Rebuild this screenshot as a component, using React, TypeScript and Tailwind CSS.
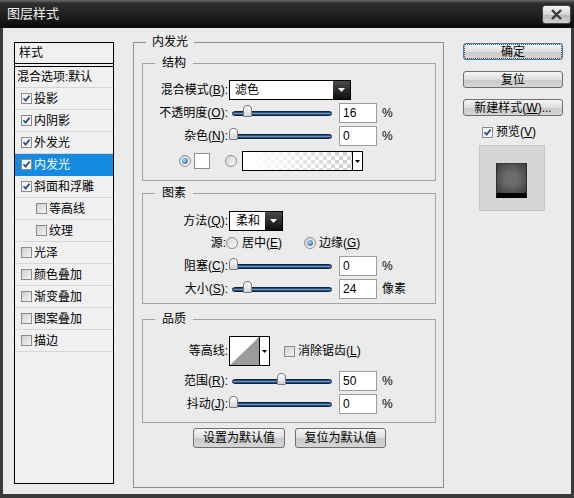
import React from "react";

type Item = { label: string; checked: boolean; indent?: boolean; active?: boolean };

const STYLES: Item[] = [
  { label: "投影", checked: true },
  { label: "内阴影", checked: true },
  { label: "外发光", checked: true },
  { label: "内发光", checked: true, active: true },
  { label: "斜面和浮雕", checked: true },
  { label: "等高线", checked: false, indent: true },
  { label: "纹理", checked: false, indent: true },
  { label: "光泽", checked: false },
  { label: "颜色叠加", checked: false },
  { label: "渐变叠加", checked: false },
  { label: "图案叠加", checked: false },
  { label: "描边", checked: false },
];

function Check({ on }: { on: boolean }) {
  return (
    <span
      className={`flex h-[11px] w-[11px] shrink-0 items-center justify-center border border-[#8a8a8a] ${
        on ? "bg-[#f6f6f6]" : "bg-[linear-gradient(135deg,#cfcfcf,#f5f5f5)]"
      }`}
    >
      {on && (
        <svg width="9" height="9" viewBox="0 0 9 9">
          <path d="M1.5 4.2 L3.6 6.6 L7.6 1.6" fill="none" stroke="#2a4f8f" strokeWidth="1.7" />
        </svg>
      )}
    </span>
  );
}

function Radio({ on }: { on: boolean }) {
  return (
    <span className="flex h-[12px] w-[12px] shrink-0 items-center justify-center rounded-full border border-[#8d8d8d] bg-[linear-gradient(135deg,#d3d3d3,#fbfbfb)]">
      {on && (
        <span className="h-[6px] w-[6px] rounded-full bg-[radial-gradient(circle_at_35%_35%,#a6d6f7,#1b5b98)]" />
      )}
    </span>
  );
}

function Label({ w = "w-[85px]", children }: { w?: string; children: React.ReactNode }) {
  return <span className={`${w} shrink-0 text-right`}>{children}</span>;
}

function Slider({ thumb }: { thumb: string }) {
  return (
    <div className="relative ml-[1px] flex h-[20px] w-[106px] shrink-0 items-center px-[3px]">
      <div className="h-[5px] w-full rounded-full border border-[#0d223d] bg-[linear-gradient(to_bottom,#12304f,#5f93c9_50%,#12304f)]" />
      <div
        className={`absolute top-[2px] h-[12px] w-[9px] rounded-t-[4px] rounded-b-[1px] border border-[#7a7a7a] bg-[linear-gradient(to_bottom,#ffffff,#d4d4d4)] ${thumb}`}
      />
    </div>
  );
}

function Num({ v }: { v: string }) {
  return (
    <div className="ml-[4px] flex h-[20px] w-[38px] shrink-0 items-center border border-[#9c9c9c] bg-white pl-[3px]">
      {v}
    </div>
  );
}

function DropBtn() {
  return (
    <span className="flex h-full w-[17px] items-center justify-center bg-[linear-gradient(to_bottom,#4a4a4a,#0e0e0e)]">
      <svg width="7" height="4" viewBox="0 0 7 4">
        <path d="M0 0 H7 L3.5 4 Z" fill="#ffffff" />
      </svg>
    </span>
  );
}

function SmallArrow() {
  return (
    <span className="flex h-full w-[10px] items-center justify-center border-l border-black bg-white">
      <svg width="5" height="3" viewBox="0 0 5 3">
        <path d="M0 0 H5 L2.5 3 Z" fill="#000000" />
      </svg>
    </span>
  );
}

function Btn({
  children,
  className = "",
  focus = false,
}: {
  children: React.ReactNode;
  className?: string;
  focus?: boolean;
}) {
  return (
    <div
      className={`flex h-[17px] items-center justify-center rounded-[3px] border bg-[linear-gradient(to_bottom,#f6f6f6,#dedede_50%,#c9c9c9_52%,#d6d6d6)] ${
        focus ? "border-[#3b7eae]" : "border-[#6e6e6e]"
      } ${className}`}
    >
      {focus ? (
        <span className="flex h-full w-full items-center justify-center border border-dotted border-[#555] leading-[12px]">
          {children}
        </span>
      ) : (
        children
      )}
    </div>
  );
}

export default function App() {
  return (
    <div className="flex h-[498px] w-[574px] flex-col bg-[#ebebeb] font-['Liberation_Sans','Noto_Sans_CJK_SC',sans-serif] text-[12px] leading-[14px] text-black">
      {/* title bar */}
      <div className="flex h-[28px] shrink-0 items-center bg-[linear-gradient(to_bottom,#6a6a6a,#2e2e2e_12%,#1c1c1c_60%,#0a0a0a)] pl-[7px] pr-[3px]">
        <span className="text-[13px] text-[#f2f2f2]">图层样式</span>
        <div className="ml-auto flex h-[19px] w-[29px] items-center justify-center rounded-[3px] border border-[#444] bg-[linear-gradient(to_bottom,#f4f4f4,#d6d6d6_50%,#b9b9b9_52%,#cfcfcf)]">
          <svg width="13" height="11" viewBox="0 0 13 11">
            <path d="M2 1 L11 10 M11 1 L2 10" stroke="#3a3a3a" strokeWidth="2.4" />
          </svg>
        </div>
      </div>

      <div className="flex flex-1 border-x-[3px] border-b-[4px] border-[#3b3b3b]">
        {/* style list */}
        <div className="ml-[11px] mt-[14px] h-[442px] w-[100px] shrink-0 border border-black bg-[#f0f0f0]">
          <div className="flex h-[21px] items-center border-b border-black pl-[4px]">样式</div>
          <div className="h-[2px]" />
          <div className="flex h-[22px] items-center border-y border-b-[#d6d6d6] border-t-black pl-[2px]">
            混合选项:默认
          </div>
          {STYLES.map((s) => (
            <div
              key={s.label}
              className={`flex h-[22px] items-center border-b ${
                s.active ? "border-[#168ae0] bg-[#168ae0] text-white" : "border-[#d6d6d6]"
              } ${s.indent ? "pl-[21px]" : "pl-[6px]"}`}
            >
              <Check on={s.checked} />
              <span className="ml-[2px]">{s.label}</span>
            </div>
          ))}
        </div>

        {/* main group */}
        <fieldset className="ml-[19px] mt-[7px] h-[453px] w-[311px] shrink-0 border border-[#8e8e8e] pl-[8px] pt-[7px]">
          <legend className="ml-[4px] px-[6px] leading-[14px]">内发光</legend>

          <fieldset className="w-[294px] border border-[#a3a3a3] pb-[9px] pt-[10px]">
            <legend className="ml-[12px] px-[7px] leading-[14px]">结构</legend>
            <div className="flex h-[20px] items-center">
              <Label>
                混合模式(<u>B</u>):
              </Label>
              <div className="ml-[1px] flex h-[20px] w-[122px] items-center justify-between border border-black bg-white">
                <span className="pl-[5px]">滤色</span>
                <DropBtn />
              </div>
            </div>
            <div className="mt-[3px] flex h-[20px] items-center">
              <Label>
                不透明度(<u>O</u>):
              </Label>
              <Slider thumb="left-[14px]" />
              <Num v="16" />
              <span className="ml-[5px]">%</span>
            </div>
            <div className="mt-[3px] flex h-[20px] items-center">
              <Label>
                杂色(<u>N</u>):
              </Label>
              <Slider thumb="left-[0px]" />
              <Num v="0" />
              <span className="ml-[5px]">%</span>
            </div>
            <div className="mt-[5px] flex h-[20px] items-center pl-[36px]">
              <Radio on />
              <span className="ml-[3px] h-[16px] w-[16px] border border-[#8f8f8f] bg-white" />
              <span className="ml-[15px]">
                <Radio on={false} />
              </span>
              <div className="ml-[5px] flex h-[20px] w-[121px] border border-black">
                <span className="flex-1 [background-image:linear-gradient(to_right,#ffffff_8%,rgba(255,255,255,0)),repeating-conic-gradient(#cfcfcf_0_25%,#ffffff_0_50%)] [background-size:100%_100%,8px_8px]" />
                <SmallArrow />
              </div>
            </div>
          </fieldset>

          <fieldset className="mt-[5px] w-[294px] border border-[#a3a3a3] pb-[4px] pt-[11px]">
            <legend className="ml-[12px] px-[7px] leading-[14px]">图素</legend>
            <div className="flex h-[20px] items-center">
              <Label>
                方法(<u>Q</u>):
              </Label>
              <div className="ml-[1px] flex h-[20px] w-[54px] items-center justify-between border border-black bg-white">
                <span className="pl-[6px]">柔和</span>
                <DropBtn />
              </div>
            </div>
            <div className="mt-[2px] flex h-[20px] items-center">
              <Label w="w-[83px]">源:</Label>
              <Radio on={false} />
              <span className="ml-[4px] w-[62px]">
                居中(<u>E</u>)
              </span>
              <Radio on />
              <span className="ml-[3px]">
                边缘(<u>G</u>)
              </span>
            </div>
            <div className="mt-[3px] flex h-[20px] items-center">
              <Label>
                阻塞(<u>C</u>):
              </Label>
              <Slider thumb="left-[0px]" />
              <Num v="0" />
              <span className="ml-[5px]">%</span>
            </div>
            <div className="mt-[3px] flex h-[20px] items-center">
              <Label>
                大小(<u>S</u>):
              </Label>
              <Slider thumb="left-[14px]" />
              <Num v="24" />
              <span className="ml-[5px]">像素</span>
            </div>
          </fieldset>

          <fieldset className="mt-[8px] w-[294px] border border-[#a3a3a3] pb-[8px] pt-[10px]">
            <legend className="ml-[12px] px-[7px] leading-[14px]">品质</legend>
            <div className="flex h-[30px] items-center">
              <Label>等高线:</Label>
              <div className="ml-[1px] flex h-[30px] w-[41px] border border-black bg-white">
                <svg width="29" height="28" viewBox="0 0 29 28" className="shrink-0">
                  <path d="M0 28 L29 0 L29 28 Z" fill="#9b9b9b" />
                </svg>
                <SmallArrow />
              </div>
              <span className="ml-[14px]">
                <Check on={false} />
              </span>
              <span className="ml-[3px]">
                消除锯齿(<u>L</u>)
              </span>
            </div>
            <div className="mt-[5px] flex h-[20px] items-center">
              <Label>
                范围(<u>R</u>):
              </Label>
              <Slider thumb="left-[48px]" />
              <Num v="50" />
              <span className="ml-[5px]">%</span>
            </div>
            <div className="mt-[3px] flex h-[20px] items-center">
              <Label>
                抖动(<u>J</u>):
              </Label>
              <Slider thumb="left-[0px]" />
              <Num v="0" />
              <span className="ml-[5px]">%</span>
            </div>
          </fieldset>

          <div className="mt-[5px] flex justify-center gap-[10px] pr-[6px]">
            <Btn className="h-[20px] w-[92px]">设置为默认值</Btn>
            <Btn className="h-[20px] w-[91px]">复位为默认值</Btn>
          </div>
        </fieldset>

        {/* right column */}
        <div className="ml-[19px] mt-[15px] flex w-[100px] shrink-0 flex-col">
          <Btn focus>确定</Btn>
          <Btn className="mt-[11px]">复位</Btn>
          <Btn className="mt-[11px]">
            新建样式(<u>W</u>)...
          </Btn>
          <div className="mt-[9px] flex h-[14px] items-center pl-[19px]">
            <Check on />
            <span className="ml-[3px]">
              预览(<u>V</u>)
            </span>
          </div>
          <div className="ml-[16px] mt-[6px] h-[66px] w-[66px] border border-[#c6c6c6] bg-[#d6d6d6] pl-[16px] pt-[17px]">
            <div className="h-[35px] w-[31px] border-x border-t border-b-[5px] border-x-[#2e2e2e] border-t-[#3a3a3a] border-b-black bg-[radial-gradient(ellipse_at_center,#6c6c6c_30%,#4e4e4e_75%,#3a3a3a)]" />
          </div>
        </div>
      </div>
    </div>
  );
}
